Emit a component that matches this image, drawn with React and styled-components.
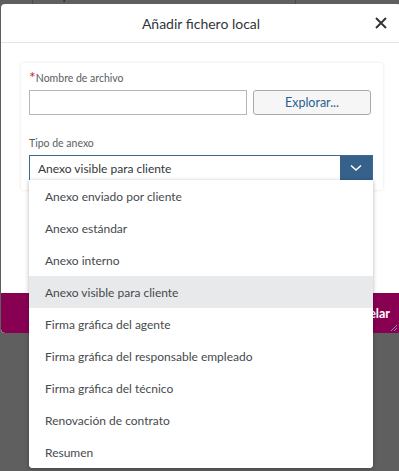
import React from "react";
import styled, { createGlobalStyle } from "styled-components";

const Global = createGlobalStyle`
  html, body { margin: 0; padding: 0; }
  body { font-family: Lato, "Noto Sans", sans-serif; }
`;

const Page = styled.div`
  position: relative;
  width: 399px;
  height: 471px;
  overflow: hidden;
  background: #5f5f5f;
`;

const BgHeader = styled.div`
  display: grid;
  grid-template-columns: 32px 263px 1fr;
  height: 18px;
  margin-top: -14px;
  color: #2a2a2a;
  font-size: 14px;
  line-height: 18px;
`;

const BgCell = styled.div`
  padding-left: ${(p) => p.$pad || 0}px;
  border-left: ${(p) => (p.$line ? "1px solid #4a4a4a" : "none")};
  white-space: nowrap;
  overflow: hidden;
`;

const Dialog = styled.div`
  position: absolute;
  left: 1px;
  top: 4px;
  width: 400px;
  height: 329px;
  background: #fff;
  border-radius: 4px;
  display: flex;
  flex-direction: column;
  overflow: hidden;
`;

const Header = styled.div`
  height: 38px;
  border-bottom: 1px solid #e4e4e4;
  display: flex;
  align-items: center;
  justify-content: center;
  position: relative;
  flex-shrink: 0;
`;

const Title = styled.div`
  font-size: 14px;
  color: #32363a;
`;

const Close = styled.button`
  position: absolute;
  right: 13px;
  top: 12px;
  width: 14px;
  height: 14px;
  padding: 0;
  border: 0;
  background: none;
  display: flex;
`;

const Body = styled.div`
  flex: 1;
  padding: 20px 18px 0 20px;
`;

const Card = styled.div`
  background: #fff;
  box-shadow: 0 0 3px rgba(0, 0, 0, 0.12);
  border-radius: 2px;
  padding: 7px 8px 10px 8px;
  height: 127px;
  box-sizing: border-box;
`;

const Label = styled.div`
  font-size: 10.5px;
  color: #5a5e62;
  height: 20px;
  display: flex;
  align-items: flex-end;
  padding-bottom: 6px;
  box-sizing: border-box;
`;

const Star = styled.span`
  color: #d0271d;
  font-size: 16px;
  line-height: 11px;
  align-self: flex-start;
  margin-top: 1px;
`;

const Row = styled.div`
  display: flex;
  gap: 6px;
  margin-bottom: 20px;
`;

const Input = styled.div`
  width: 218px;
  height: 25px;
  border: 1px solid #b4b6b8;
  box-sizing: border-box;
  background: #fff;
`;

const BrowseButton = styled.button`
  width: 118px;
  height: 25px;
  box-sizing: border-box;
  border: 1px solid #a7aaad;
  border-radius: 3px;
  background: #f6f6f6;
  color: #2b5f8f;
  font-family: inherit;
  font-size: 12.5px;
  padding: 0;
`;

const Select = styled.div`
  display: flex;
  width: 344px;
  height: 26px;
  border: 1px solid #3b6a96;
  box-sizing: border-box;
  background: #fff;
`;

const SelectText = styled.div`
  flex: 1;
  font-size: 12px;
  color: #32363a;
  padding-left: 8px;
  display: flex;
  align-items: center;
`;

const SelectArrow = styled.div`
  width: 32px;
  background: #35618b;
  display: flex;
  align-items: center;
  justify-content: center;
`;

const Footer = styled.div`
  height: 40px;
  flex-shrink: 0;
  background: #870052;
  border-radius: 0 0 0 4px;
  display: flex;
  align-items: center;
  justify-content: flex-end;
  padding-right: 11px;
  position: relative;
`;

const FooterButton = styled.span`
  color: #fff;
  font-weight: 700;
  font-size: 12.5px;
`;

const Grip = styled.svg`
  position: absolute;
  right: 4px;
  bottom: 2px;
`;

const Menu = styled.ul`
  position: absolute;
  left: 29px;
  top: 180px;
  width: 344px;
  margin: 0;
  padding: 0;
  list-style: none;
  background: #fff;
  border-radius: 0 0 4px 4px;
  box-shadow: 0 1px 4px rgba(0, 0, 0, 0.3);
  overflow: hidden;
`;

const Item = styled.li`
  height: 32px;
  display: flex;
  align-items: center;
  padding-left: 16px;
  font-size: 12px;
  color: #464a4e;
  background: ${(p) => (p.$selected ? "#e8e9eb" : "#fff")};
`;

const items = [
  "Anexo enviado por cliente",
  "Anexo estándar",
  "Anexo interno",
  "Anexo visible para cliente",
  "Firma gráfica del agente",
  "Firma gráfica del responsable empleado",
  "Firma gráfica del técnico",
  "Renovación de contrato",
  "Resumen",
];

export default function App() {
  return (
    <Page>
      <Global />
      <BgHeader>
        <BgCell />
        <BgCell $line $pad={18}>Tipo</BgCell>
        <BgCell $line $pad={14}>Fecha de modificación</BgCell>
      </BgHeader>
      <Dialog>
        <Header>
          <Title>Añadir fichero local</Title>
          <Close aria-label="Cerrar">
            <svg width="14" height="14" viewBox="0 0 14 14">
              <path d="M2 2 L12 12 M12 2 L2 12" stroke="#32363a" strokeWidth="2" />
            </svg>
          </Close>
        </Header>
        <Body>
          <Card>
            <Label>
              <Star>*</Star>Nombre de archivo
            </Label>
            <Row>
              <Input />
              <BrowseButton>Explorar...</BrowseButton>
            </Row>
            <Label>Tipo de anexo</Label>
            <Select>
              <SelectText>Anexo visible para cliente</SelectText>
              <SelectArrow>
                <svg width="12" height="8" viewBox="0 0 12 8">
                  <path d="M1 1.5 L6 6 L11 1.5" fill="none" stroke="#fff" strokeWidth="1.6" />
                </svg>
              </SelectArrow>
            </Select>
          </Card>
        </Body>
        <Footer>
          <FooterButton>Cancelar</FooterButton>
          <Grip width="6" height="6" viewBox="0 0 6 6">
            <path d="M0 6 L6 0 M3 6 L6 3" stroke="#7b8fd6" strokeWidth="1" />
          </Grip>
        </Footer>
      </Dialog>
      <Menu>
        {items.map((t) => (
          <Item key={t} $selected={t === "Anexo visible para cliente"}>
            {t}
          </Item>
        ))}
      </Menu>
    </Page>
  );
}
